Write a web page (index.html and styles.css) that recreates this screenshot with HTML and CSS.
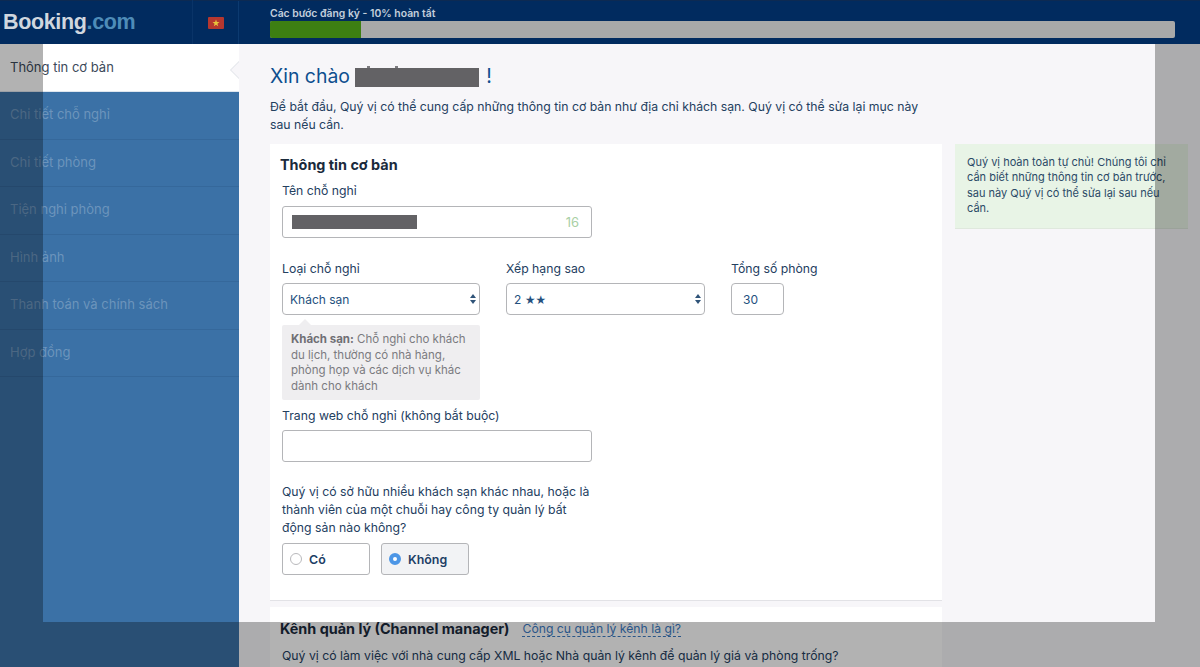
FILE: index.html
```html
<!DOCTYPE html>
<html lang="vi">
<head>
<meta charset="utf-8">
<title>Booking.com</title>
<link rel="stylesheet" href="styles.css">
</head>
<body>
<div class="page">
  <header class="topbar">
    <div class="brand">
      <div class="logo"><span class="logo-main">Booking</span><span class="logo-com">.com</span></div>
      <div class="lang">
        <svg class="flag" viewBox="0 0 16 12" width="16" height="12"><rect width="16" height="12" rx="1" fill="#b5372f"/><polygon points="8,2.6 8.9,5.1 11.5,5.1 9.4,6.7 10.2,9.2 8,7.7 5.8,9.2 6.6,6.7 4.5,5.1 7.1,5.1" fill="#e8c33c"/></svg>
      </div>
    </div>
    <div class="progress-area">
      <div class="progress-label">Các bước đăng ký - 10% hoàn tất</div>
      <div class="progress-track"><div class="progress-fill" style="width:10%"></div></div>
    </div>
  </header>
  <div class="layout">
    <nav class="sidebar">
      <a class="nav-item active">Thông tin cơ bản</a>
      <a class="nav-item">Chi tiết chỗ nghỉ</a>
      <a class="nav-item">Chi tiết phòng</a>
      <a class="nav-item">Tiện nghi phòng</a>
      <a class="nav-item">Hình ảnh</a>
      <a class="nav-item">Thanh toán và chính sách</a>
      <a class="nav-item">Hợp đồng</a>
    </nav>
    <main class="main">
      <h1 class="greeting">Xin chào <span class="redact-title"></span>!</h1>
      <p class="intro">Để bắt đầu, Quý vị có thể cung cấp những thông tin cơ bản như địa chỉ khách sạn. Quý vị có thể sửa lại mục này sau nếu cần.</p>
      <div class="columns">
        <div class="cards">
          <section class="card first">
            <h2 class="card-title">Thông tin cơ bản</h2>
            <div class="label name-label">Tên chỗ nghỉ</div>
            <div class="field name-field"><span class="redact-name"></span><span class="counter">16</span></div>
            <div class="triple">
              <div class="col-type">
                <div class="label">Loại chỗ nghỉ</div>
                <div class="select"><span>Khách sạn</span>
                  <svg class="updown" viewBox="0 0 6 10" width="6" height="10"><path d="M3 0 6 4H0zM3 10 0 6h6z"/></svg>
                </div>
                <div class="hint"><b>Khách sạn:</b> Chỗ nghỉ cho khách du lịch, thường có nhà hàng, phòng họp và các dịch vụ khác dành cho khách</div>
              </div>
              <div class="col-star">
                <div class="label">Xếp hạng sao</div>
                <div class="select"><span>2 <span class="stars">★★</span></span>
                  <svg class="updown" viewBox="0 0 6 10" width="6" height="10"><path d="M3 0 6 4H0zM3 10 0 6h6z"/></svg>
                </div>
              </div>
              <div class="col-rooms">
                <div class="label">Tổng số phòng</div>
                <div class="select rooms"><span>30</span></div>
              </div>
            </div>
            <div class="label web-label">Trang web chỗ nghỉ (không bắt buộc)</div>
            <div class="field web-field"></div>
            <p class="question">Quý vị có sở hữu nhiều khách sạn khác nhau, hoặc là thành viên của một chuỗi hay công ty quản lý bất động sản nào không?</p>
            <div class="radios">
              <div class="radio"><span class="dot"></span>Có</div>
              <div class="radio checked"><span class="dot"></span>Không</div>
            </div>
          </section>
          <section class="card second">
            <div class="second-head"><h2 class="card-title">Kênh quản lý (Channel manager)</h2><a class="help-link">Công cụ quản lý kênh là gì?</a></div>
            <p class="second-text">Quý vị có làm việc với nhà cung cấp XML hoặc Nhà quản lý kênh để quản lý giá và phòng trống?</p>
          </section>
        </div>
        <aside class="note">Quý vị hoàn toàn tự chủ! Chúng tôi chỉ cần biết những thông tin cơ bản trước, sau này Quý vị có thể sửa lại sau nếu cần.</aside>
      </div>
    </main>
  </div>
  <div class="dim-clip"><div class="dim-hole"></div></div>
</div>
</body>
</html>
```
FILE: styles.css
```css
* { box-sizing: border-box; }
html, body { margin: 0; padding: 0; }
body { font-family: Inter, "Noto Sans", "Liberation Sans", sans-serif; color: #24405f; }
.page { position: relative; width: 1200px; height: 667px; overflow: hidden; background: #f7f6f9; display: flex; flex-direction: column; }

.topbar { height: 44px; flex: none; display: flex; background: #012b5f; border-top: 1px solid #0d2a52; }
.brand { width: 239px; flex: none; display: flex; border-right: 1px solid #0c3a70; }
.logo { width: 193px; padding-left: 3px; font-family: "Liberation Sans", sans-serif; font-weight: 700; font-size: 21.5px; line-height: 44px; letter-spacing: -0.35px; border-right: 1px solid #0a3468; margin-top: -1px; }
.logo-main { color: #d0d7df; }
.logo-com { color: #4e8cb8; }
.lang { flex: 1; display: flex; align-items: center; justify-content: center; }
.progress-area { flex: 1; padding: 5px 25px 0 31px; }
.progress-label { font-size: 10.4px; line-height: 15px; font-weight: 600; color: #c3cfdc; }
.progress-track { height: 17px; background: #a8a9a9; border-radius: 2px; overflow: hidden; }
.progress-fill { height: 100%; background: #3d7f12; }

.layout { flex: 1; display: flex; min-height: 0; }
.sidebar { width: 239px; flex: none; background: #3b71a6; }
.nav-item { position: relative; display: block; height: 47.5px; padding-left: 10px; line-height: 44px; font-size: 13px; color: rgba(255,255,255,.26); border-bottom: 1px solid #35689b; }
.nav-item.active { height: 48px; line-height: 46px; background: #fff; color: #3c4a5a; border-bottom-color: #dfe6ee; }
.nav-item.active::after { content: ""; position: absolute; right: -1px; top: 17px; width: 0; height: 0; border: 9px solid transparent; border-right-color: #f7f6f9; border-left-width: 0; filter: drop-shadow(-1px 0 0 #dde1e6); }

.main { flex: 1; padding: 19px 0 0 31px; min-width: 0; }
.greeting { margin: 0; font-size: 19.4px; line-height: 24px; font-weight: 400; color: #0e4f8f; height: 25px; display: flex; align-items: center; white-space: pre; }
.redact-title { position: relative; display: inline-block; width: 124px; height: 19px; margin: 3px 7px 0 0; background: #636265; }
.redact-title::before, .redact-title::after { content: ""; position: absolute; top: -2px; width: 3px; height: 2px; background: #7d7c80; }
.redact-title::before { left: 12px; }
.redact-title::after { left: 40px; }
.intro { margin: 10px 0 0; width: 660px; font-size: 12.25px; line-height: 18px; color: #24405f; }
.columns { display: flex; gap: 13px; margin-top: 10px; }
.cards { width: 672px; flex: none; }
.card { background: #fff; padding: 0 12px; }
.first { height: 457px; border-bottom: 1px solid #e2e2e6; padding-top: 12px; }
.card-title { margin: 0 0 0 -2px; font-size: 14.4px; line-height: 18px; font-weight: 700; color: #1a2a3c; }
.label { font-size: 12.25px; line-height: 18px; color: #24405f; }
.name-label { margin-top: 8px; }
.field { border: 1px solid #b4b5b8; border-radius: 3px; background: #fff; width: 310px; height: 32px; }
.name-field { margin-top: 6px; display: flex; align-items: center; justify-content: space-between; padding: 0 12px 0 9px; }
.redact-name { width: 125px; height: 14px; background: #636265; }
.counter { font-size: 13px; color: #a9d0a5; }
.triple { display: flex; margin-top: 22px; }
.col-type { width: 198px; margin-right: 26px; }
.col-star { width: 199px; margin-right: 26px; }
.col-rooms { width: 120px; }
.select { margin-top: 5px; height: 32px; border: 1px solid #b4b5b8; border-radius: 4px; background: #fff; display: flex; align-items: center; justify-content: space-between; padding: 0 3px 0 7px; font-size: 12px; color: #24507e; }
.stars { font-size: 10.5px; letter-spacing: -0.3px; }
.rooms { width: 53px; padding-left: 11px; }
.updown { fill: #2f5378; }
.hint { position: relative; margin-top: 10px; height: 75px; padding: 7px 9px 0; background: #efeef0; border-radius: 2px; font-size: 11.5px; line-height: 15.7px; color: #7b7b80; }
.hint b { font-weight: 700; color: #6f6f74; }
.hint::before { content: ""; position: absolute; left: 17px; top: -6px; border: 6px solid transparent; border-bottom-color: #efeef0; border-top-width: 0; }
.web-label { margin-top: 7px; }
.web-field { margin-top: 5px; }
.question { margin: 21px 0 0; width: 310px; font-size: 12.25px; line-height: 18px; color: #24405f; }
.radios { display: flex; gap: 11px; margin-top: 6px; }
.radio { width: 88px; height: 32px; border: 1px solid #b4b5b8; border-radius: 3px; display: flex; align-items: center; gap: 7px; padding-left: 7px; font-size: 12.4px; font-weight: 600; color: #1d3f66; background: #fff; }
.dot { width: 12px; height: 12px; border-radius: 50%; border: 1px solid #b9b9bc; background: #fff; flex: none; }
.radio.checked { background: #f2f3f5; }
.radio.checked .dot { border: 4px solid #4c96e6; }
.second { margin-top: 6px; height: 70px; padding-top: 13px; }
.second-head { display: flex; align-items: center; gap: 13px; }
.help-link { font-size: 12.2px; line-height: 15px; color: #3d7cc4; border-bottom: 1px dashed #3d7cc4; }
.second-text { margin: 9px 0 0; font-size: 12.25px; line-height: 18px; color: #24405f; }
.note { width: 233px; height: 85px; padding: 11px 12px; background: #e8f4e6; border-bottom: 1px solid #dfe8dd; font-size: 11px; line-height: 15.3px; color: #2b4a66; }

.dim-clip { position: absolute; left: 0; right: 0; top: 44px; bottom: 0; overflow: hidden; pointer-events: none; }
.dim-hole { position: absolute; left: 43px; top: -100px; width: 1112px; height: 678px; box-shadow: 0 0 0 1200px rgba(0,0,0,.3); }
```
